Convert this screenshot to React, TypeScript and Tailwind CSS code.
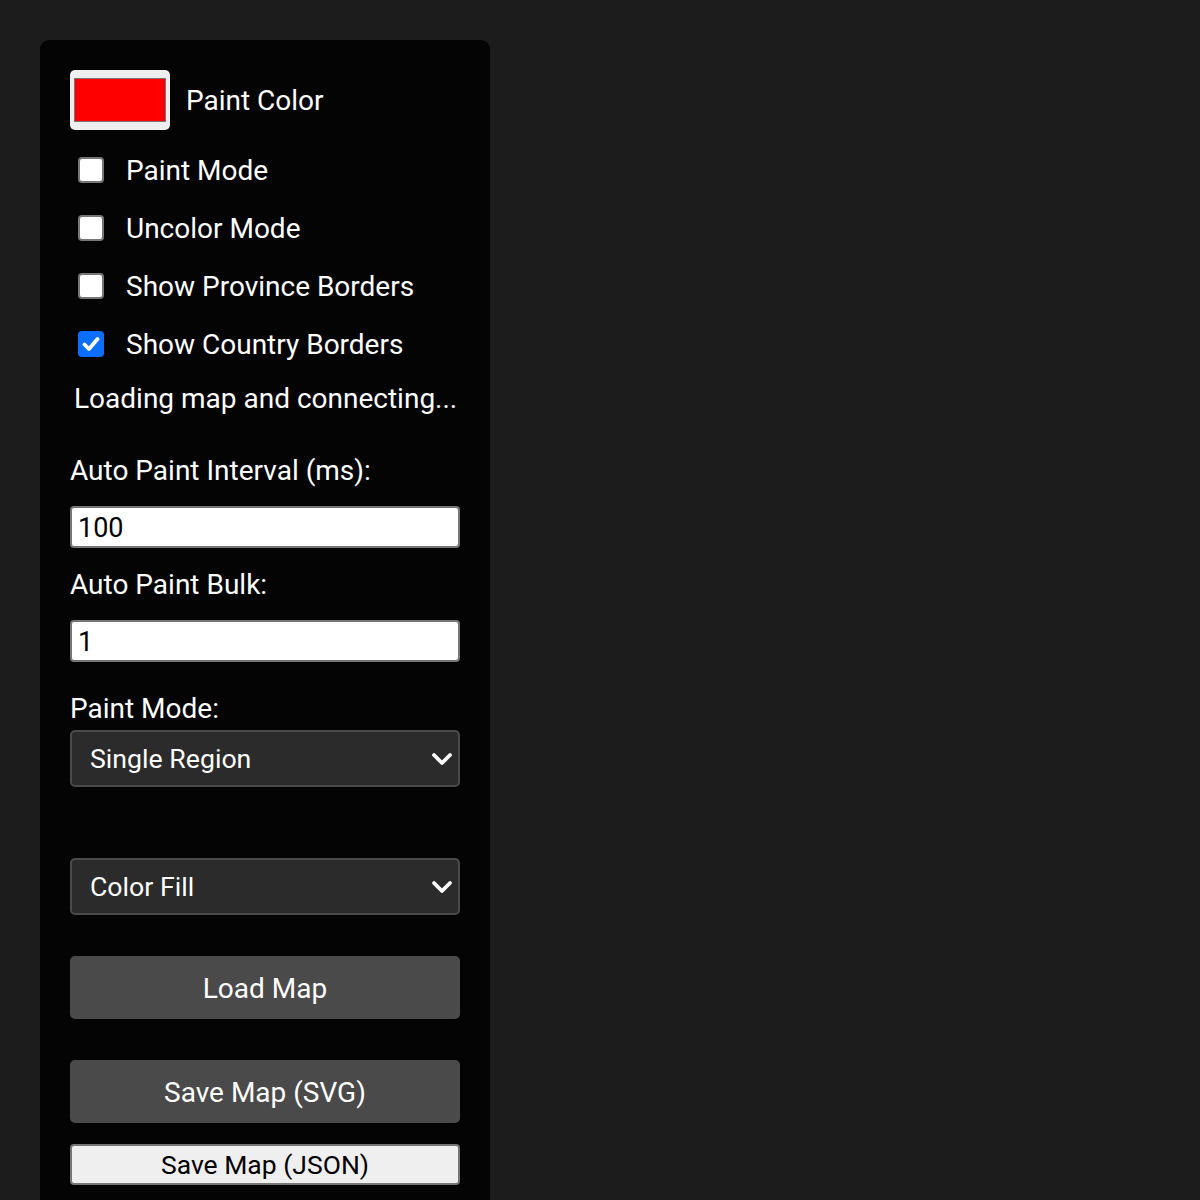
import { useState } from 'react';

const font = { fontFamily: 'Roboto, "Liberation Sans", sans-serif' };

function Check({ label, checked, onChange }: { label: string; checked: boolean; onChange: () => void }) {
  return (
    <label className="flex items-center h-[58px] cursor-pointer">
      <span
        onClick={onChange}
        className={
          checked
            ? 'ml-2 w-[26px] h-[26px] rounded-[4px] bg-[#0b6efd] flex items-center justify-center'
            : 'ml-2 w-[26px] h-[26px] rounded-[4px] bg-white border-2 border-[#767676]'
        }
      >
        {checked && (
          <svg width="18" height="16" viewBox="0 0 18 16">
            <polyline points="2.5,8.5 7,13 15.5,3" fill="none" stroke="white" strokeWidth="3.8" strokeLinecap="round" strokeLinejoin="round" />
          </svg>
        )}
      </span>
      <span className="ml-[22px] pt-[2px] text-[28px] leading-[30px] text-white">{label}</span>
    </label>
  );
}

function Select({ value, className }: { value: string; className: string }) {
  return (
    <div className={`h-[57px] w-[390px] rounded-[5px] bg-[#2b2b2b] border-2 border-[#4a4a4a] flex items-center justify-between pl-[18px] pr-[5px] ${className}`}>
      <span className="pt-[2px] text-[26.7px] text-white">{value}</span>
      <svg width="22" height="14" viewBox="0 0 22 14">
        <polyline points="3,3 11,11 19,3" fill="none" stroke="white" strokeWidth="3.8" strokeLinecap="round" strokeLinejoin="round" />
      </svg>
    </div>
  );
}

export default function App() {
  const [flags, setFlags] = useState({ paint: false, uncolor: false, province: false, country: true });
  const [interval, setInterval] = useState('100');
  const [bulk, setBulk] = useState('1');

  const toggle = (k: keyof typeof flags) => setFlags((f) => ({ ...f, [k]: !f[k] }));

  return (
    <div className="min-h-[1200px] bg-[#1c1c1c] pt-10 pl-10 overflow-hidden" style={font}>
      <div className="w-[450px] bg-[#040404] rounded-t-[9px] pt-[30px] pl-[30px] pb-10">
        <div className="flex items-center h-[60px]">
          <div className="w-[100px] h-[60px] rounded-[5px] bg-[#efefef] flex items-center justify-center">
            <div className="w-[92px] h-[44px] bg-[#ff0000] border border-[#777]" />
          </div>
          <span className="ml-4 pt-[2px] text-[28px] text-white">Paint Color</span>
        </div>

        <div className="mt-[11px]">
          <Check label="Paint Mode" checked={flags.paint} onChange={() => toggle('paint')} />
          <Check label="Uncolor Mode" checked={flags.uncolor} onChange={() => toggle('uncolor')} />
          <Check label="Show Province Borders" checked={flags.province} onChange={() => toggle('province')} />
          <Check label="Show Country Borders" checked={flags.country} onChange={() => toggle('country')} />
        </div>

        <p className="mt-[11px] ml-1 text-[28px] leading-[30px] text-white">Loading map and connecting...</p>

        <p className="mt-[42px] text-[28px] leading-[30px] text-white">Auto Paint Interval (ms):</p>
        <input
          value={interval}
          onChange={(e) => setInterval(e.target.value)}
          className="mt-[20px] block w-[390px] h-[42px] rounded-[4px] border-2 border-[#767676] bg-white px-[6px] pt-[2px] text-[27px] text-black outline-none"
        />

        <p className="mt-[22px] text-[28px] leading-[30px] text-white">Auto Paint Bulk:</p>
        <input
          value={bulk}
          onChange={(e) => setBulk(e.target.value)}
          className="mt-[20px] block w-[390px] h-[42px] rounded-[4px] border-2 border-[#767676] bg-white px-[6px] pt-[2px] text-[27px] text-black outline-none"
        />

        <p className="mt-[32px] text-[28px] leading-[30px] text-white">Paint Mode:</p>
        <Select value="Single Region" className="mt-[6px]" />
        <Select value="Color Fill" className="mt-[71px]" />

        <button className="mt-[41px] block w-[390px] h-[63px] rounded-[5px] bg-[#4a4a4a] pt-[2px] text-[28px] text-white">Load Map</button>
        <button className="mt-[41px] block w-[390px] h-[63px] rounded-[5px] bg-[#4a4a4a] pt-[2px] text-[28px] text-white">Save Map (SVG)</button>
        <button className="mt-[21px] block w-[390px] h-[41px] rounded-[4px] border-2 border-[#767676] bg-[#efefef] pt-[2px] text-[26.5px] leading-none text-black">Save Map (JSON)</button>
      </div>
    </div>
  );
}
